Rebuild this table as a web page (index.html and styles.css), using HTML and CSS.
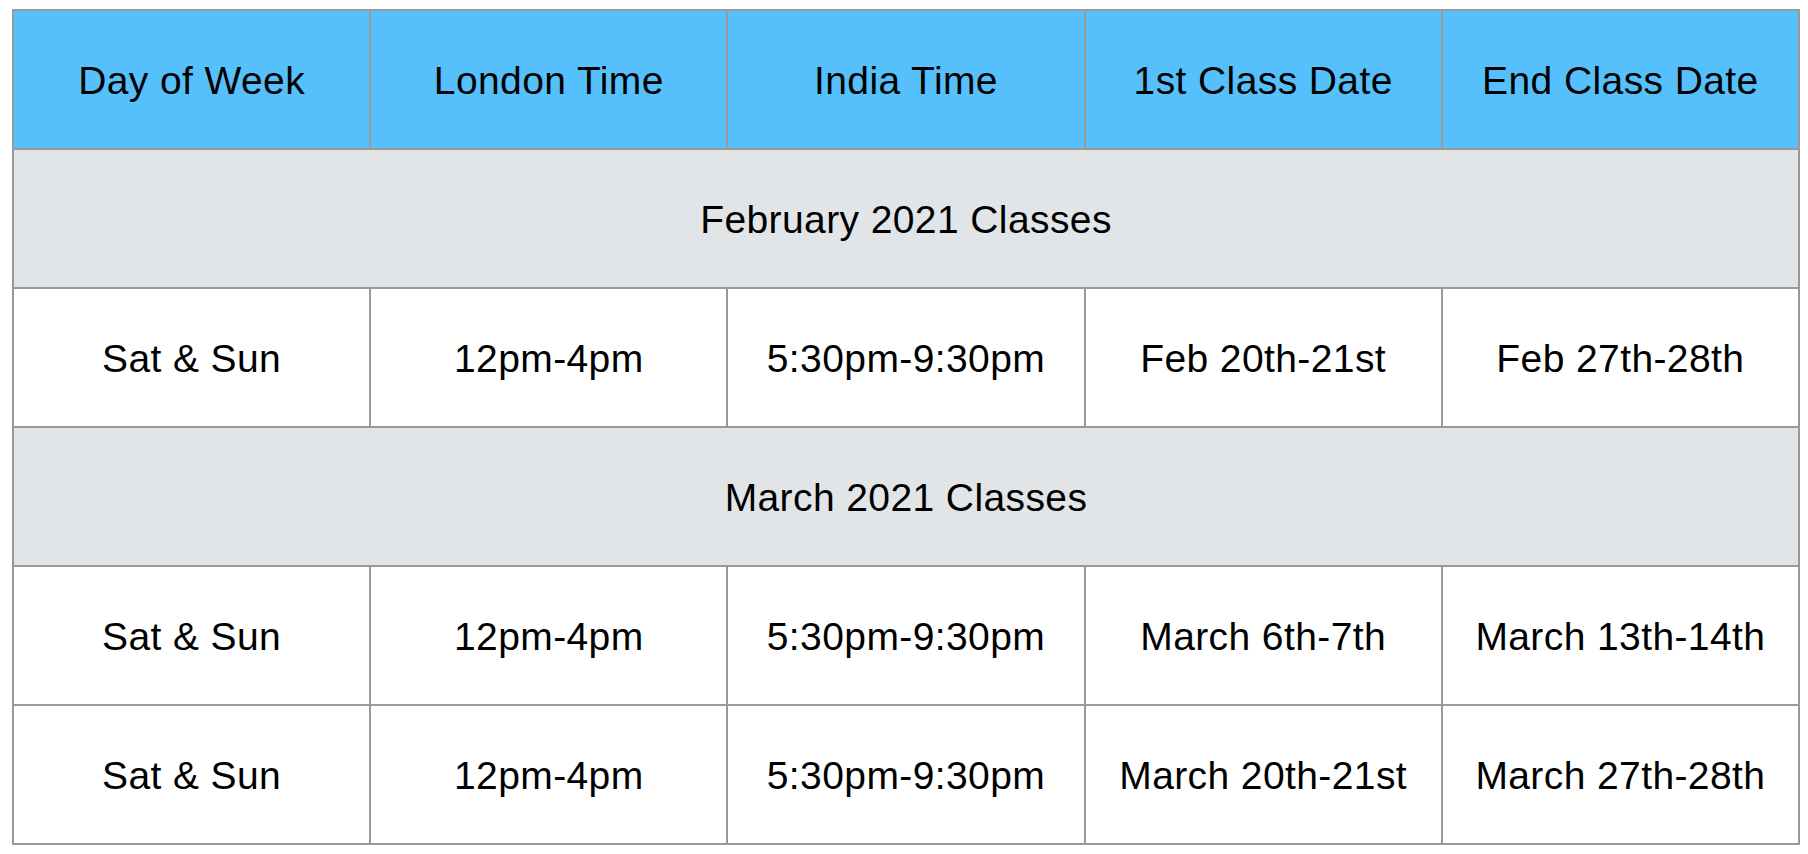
FILE: index.html
```html
<!DOCTYPE html>
<html>
<head>
<meta charset="utf-8">
<link rel="stylesheet" href="styles.css">
</head>
<body>
<table class="schedule">
  <colgroup><col><col><col><col><col></colgroup>
  <thead>
    <tr class="head">
      <th>Day of Week</th>
      <th>London Time</th>
      <th>India Time</th>
      <th>1st Class Date</th>
      <th>End Class Date</th>
    </tr>
  </thead>
  <tbody>
    <tr class="group"><td colspan="5">February 2021 Classes</td></tr>
    <tr><td>Sat &amp; Sun</td><td>12pm-4pm</td><td>5:30pm-9:30pm</td><td>Feb 20th-21st</td><td>Feb 27th-28th</td></tr>
    <tr class="group"><td colspan="5">March 2021 Classes</td></tr>
    <tr><td>Sat &amp; Sun</td><td>12pm-4pm</td><td>5:30pm-9:30pm</td><td>March 6th-7th</td><td>March 13th-14th</td></tr>
    <tr><td>Sat &amp; Sun</td><td>12pm-4pm</td><td>5:30pm-9:30pm</td><td>March 20th-21st</td><td>March 27th-28th</td></tr>
  </tbody>
</table>
</body>
</html>
```
FILE: styles.css
```css
html, body {
  margin: 0;
  padding: 0;
  background: #ffffff;
}
body {
  padding: 9px 8px 0 12px;
  font-family: "Liberation Sans", Arial, sans-serif;
  color: #000;
}
.schedule {
  width: 1788px;
  table-layout: fixed;
  border-collapse: separate;
  border-spacing: 0;
  border-left: 2px solid #999999;
  border-top: 2px solid #999999;
}
.schedule th,
.schedule td {
  height: 135px;
  padding: 2px 0 0 0;
  border-right: 2px solid #999999;
  border-bottom: 2px solid #999999;
  text-align: center;
  vertical-align: middle;
  font-size: 39px;
  line-height: 45px;
  letter-spacing: 0.4px;
  font-weight: normal;
  white-space: nowrap;
}
.head th {
  background: #56c0fd;
}
.group td {
  background: #e2e5e8;
}
.schedule tbody tr:not(.group) td {
  background: #ffffff;
}
```
